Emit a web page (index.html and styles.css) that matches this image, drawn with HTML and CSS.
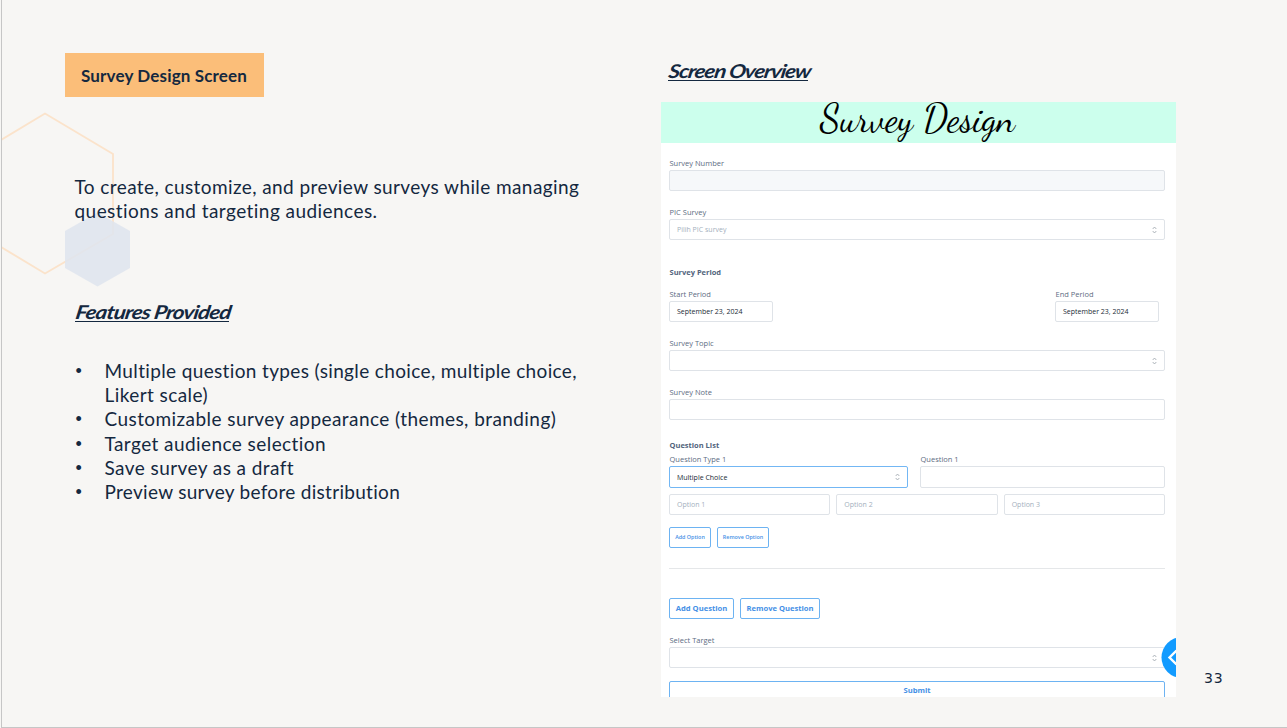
FILE: index.html
```html
<!DOCTYPE html>
<html lang="en">
<head>
<meta charset="utf-8">
<title>Survey Design Screen</title>
<link rel="stylesheet" href="styles.css">
</head>
<body>
<main class="slide">
  <svg class="decor" width="140" height="190" viewBox="0 0 140 190" aria-hidden="true">
    <path d="M-1 36 43 9.500 111 50V130L43 169.500 -1 143" fill="none" stroke="#fbe3cb" stroke-width="1.900"/>
    <path d="M95.500 108.500 128 127V164L95.500 182.500 63 164V127Z" fill="#dfe5ee" fill-opacity=".88"/>
  </svg>
  <section class="intro">
    <h1 class="title"><span>Survey Design Screen</span></h1>
    <p class="lead"><span class="l1">To create, customize, and preview surveys while managing</span><br><span class="l2">questions and targeting audiences.</span></p>
    <h2 class="heading features-heading"><span>Features Provided</span></h2>
    <ul class="features">
      <li><span class="f1">Multiple question types (single choice, multiple choice,</span><br><span class="f2">Likert scale)</span></li>
      <li><span class="f3">Customizable survey appearance (themes, branding)</span></li>
      <li><span class="f4">Target audience selection</span></li>
      <li><span class="f5">Save survey as a draft</span></li>
      <li><span class="f6">Preview survey before distribution</span></li>
    </ul>
  </section>
  <section class="overview">
    <h2 class="heading overview-heading"><span>Screen Overview</span></h2>
    <div class="panel">
      <header class="banner"><span>Survey Design</span></header>
      <div class="form">
        <div class="label first"><span>Survey Number</span></div>
        <div class="field disabled"></div>
        <div class="label"><span>PIC Survey</span></div>
        <div class="field hint"><span>Pilih PIC survey</span><svg class="sort" viewBox="0 0 5 8"><path d="M.7 3 2.500 1 4.300 3M.7 5 2.500 7 4.300 5"/></svg></div>
        <div class="label strong period"><span>Survey Period</span></div>
        <div class="dates">
          <div><div class="label"><span>Start Period</span></div><div class="field"><span>September 23, 2024</span></div></div>
          <div><div class="label"><span>End Period</span></div><div class="field"><span>September 23, 2024</span></div></div>
        </div>
        <div class="label"><span>Survey Topic</span></div>
        <div class="field"><svg class="sort" viewBox="0 0 5 8"><path d="M.7 3 2.500 1 4.300 3M.7 5 2.500 7 4.300 5"/></svg></div>
        <div class="label"><span>Survey Note</span></div>
        <div class="field"></div>
        <div class="label strong list"><span>Question List</span></div>
        <div class="question">
          <div><div class="label"><span>Question Type 1</span></div><div class="field active"><span>Multiple Choice</span><svg class="sort" viewBox="0 0 5 8"><path d="M.7 3 2.500 1 4.300 3M.7 5 2.500 7 4.300 5"/></svg></div></div>
          <div><div class="label"><span>Question 1</span></div><div class="field"></div></div>
        </div>
        <div class="options">
          <div class="field hint"><span>Option 1</span></div>
          <div class="field hint"><span>Option 2</span></div>
          <div class="field hint"><span>Option 3</span></div>
        </div>
        <div class="buttons small"><div class="button add"><span>Add Option</span></div><div class="button remove"><span>Remove Option</span></div></div>
        <div class="rule"></div>
        <div class="buttons large"><div class="button add"><span>Add Question</span></div><div class="button remove"><span>Remove Question</span></div></div>
        <div class="label"><span>Select Target</span></div>
        <div class="field"><svg class="sort" viewBox="0 0 5 8"><path d="M.7 3 2.500 1 4.300 3M.7 5 2.500 7 4.300 5"/></svg></div>
        <div class="button submit"><span>Submit</span></div>
      </div>
      <svg class="toggle" width="15" height="42" viewBox="0 0 15 42"><circle cx="21" cy="20.500" r="20.500" fill="#129bff"/><path d="M15.500 13.500 8.500 20.500 15.500 27.500" fill="none" stroke="#fff" stroke-width="2.400"/></svg>
    </div>
  </section>
  <div class="page-number">33</div>
</main>
</body>
</html>
```
FILE: styles.css
```css
* { box-sizing: border-box; }
body { margin: 0; padding-left: 1px; background: #f7f6f4; }
h1, h2, p, ul { margin: 0; padding: 0; }
.slide {
  position: relative;
  width: 1286px;
  height: 728px;
  overflow: hidden;
  display: flex;
  background: #f7f6f4;
  border-left: 1px solid #c6c6c6;
  border-bottom: 1px solid #c6c6c6;
  color: #14283f;
  font-family: Lato, sans-serif;
}
.decor { position: absolute; left: 0; top: 104px; }
.intro { position: relative; width: 659px; padding: 53px 0 0 63px; }
.title {
  width: 199px;
  height: 44px;
  padding-left: 16px;
  background: #fbbe79;
  font: 700 17px/46px Lato, sans-serif;
  letter-spacing: .15px;
  white-space: nowrap;
}
.lead { margin: 78px 0 0 9.500px; font-size: 19px; line-height: 24px; letter-spacing: .41px; white-space: nowrap; }
.l2 { letter-spacing: .45px; }
.heading { height: 22px; font: italic 700 19px/24px Lato, sans-serif; white-space: nowrap; border-bottom: 1px solid #14283f; }
.heading span { display: inline-block; letter-spacing: -.75px; transform: scaleX(1.180) skewX(-8deg); transform-origin: 0 75%; }
.overview-heading span { letter-spacing: -.95px; }
.features-heading { width: 154px; margin: 77px 0 0 10px; }
.features { margin: 37px 0 0 10px; list-style: none; font-size: 19px; line-height: 24.200px; letter-spacing: .36px; white-space: nowrap; }
.f2, .f3, .f4, .f5 { letter-spacing: .43px; }
.f6 { letter-spacing: .3px; }
.features li { display: flow-root; padding-left: 29.500px; }
.features li::before { content: "•"; float: left; width: 29px; margin-left: -29px; font-family: "Liberation Sans", sans-serif; font-size: 18px; }
.overview { width: 515px; padding-top: 59px; }
.overview-heading { width: 140px; margin-left: 7px; }
.panel { position: relative; height: 595px; margin-top: 21px; background: #fff; }
.banner {
  height: 41px;
  padding-right: 2px;
  background: #ccffed;
  color: #000;
  text-align: center;
  font: 400 38px/34px "Dancing Script", "Z003", "Liberation Serif", cursive;
}
.form { height: 554px; overflow: hidden; padding: 0 11px 0 8px; font: 7.500px/13px "Open Sans", sans-serif; white-space: nowrap; }
.label { height: 13px; margin-top: 15px; padding-left: .5px; color: #5d6c82; }
.label.first { margin-top: 14px; }
.strong { font-weight: 700; color: #52647c; }
.period { margin-top: 25px; }
.period span { position: relative; top: .5px; }
.list { margin-top: 19px; }
.field {
  display: flex;
  align-items: center;
  justify-content: space-between;
  height: 21px;
  padding: 0 7px;
  border: 1px solid #dfe3e8;
  border-radius: 2px;
  color: #222b35;
  font-size: 7px;
}
.disabled { background: #f6f8fa; }
.hint { color: #a3afbd; }
.sort { width: 5px; height: 8px; margin-left: auto; fill: none; stroke: #9ba2aa; stroke-width: .8; }
.dates { display: flex; justify-content: space-between; padding-right: 6px; margin-top: 10px; }
.dates > div { width: 104px; }
.dates .label { margin-top: 0; }
.question { display: grid; grid-template-columns: 239px 245px; gap: 12px; margin-top: 1px; }
.question .label { margin-top: 0; }
.question .field { height: 22px; }
.question .active { border-color: #73b7f4; }
.options { display: grid; grid-template-columns: repeat(3, 1fr); gap: 6px; margin-top: 6px; }
.buttons { display: flex; gap: 6px; }
.button {
  height: 21px;
  border: 1px solid #6db3f2;
  border-radius: 2px;
  color: #4590e6;
  text-align: center;
  font-weight: 600;
  line-height: 19px;
}
.small { margin-top: 12px; font-size: 5.400px; }
.small .add { width: 42px; }
.small .remove { width: 52px; }
.rule { height: 1px; margin-top: 20px; background: #e5e7e9; }
.large { margin-top: 29px; font-size: 7.600px; font-weight: 700; }
.large .button, .submit { font-weight: 700; }
.large .add { width: 65px; }
.large .remove { width: 80px; }
.submit { margin-top: 13px; font-size: 7.600px; line-height: 17px; }
.toggle { position: absolute; right: 0; top: 535px; }
.page-number { margin: 667px 0 0 28px; font: 14px/22px "DejaVu Sans", sans-serif; letter-spacing: .9px; }
```
